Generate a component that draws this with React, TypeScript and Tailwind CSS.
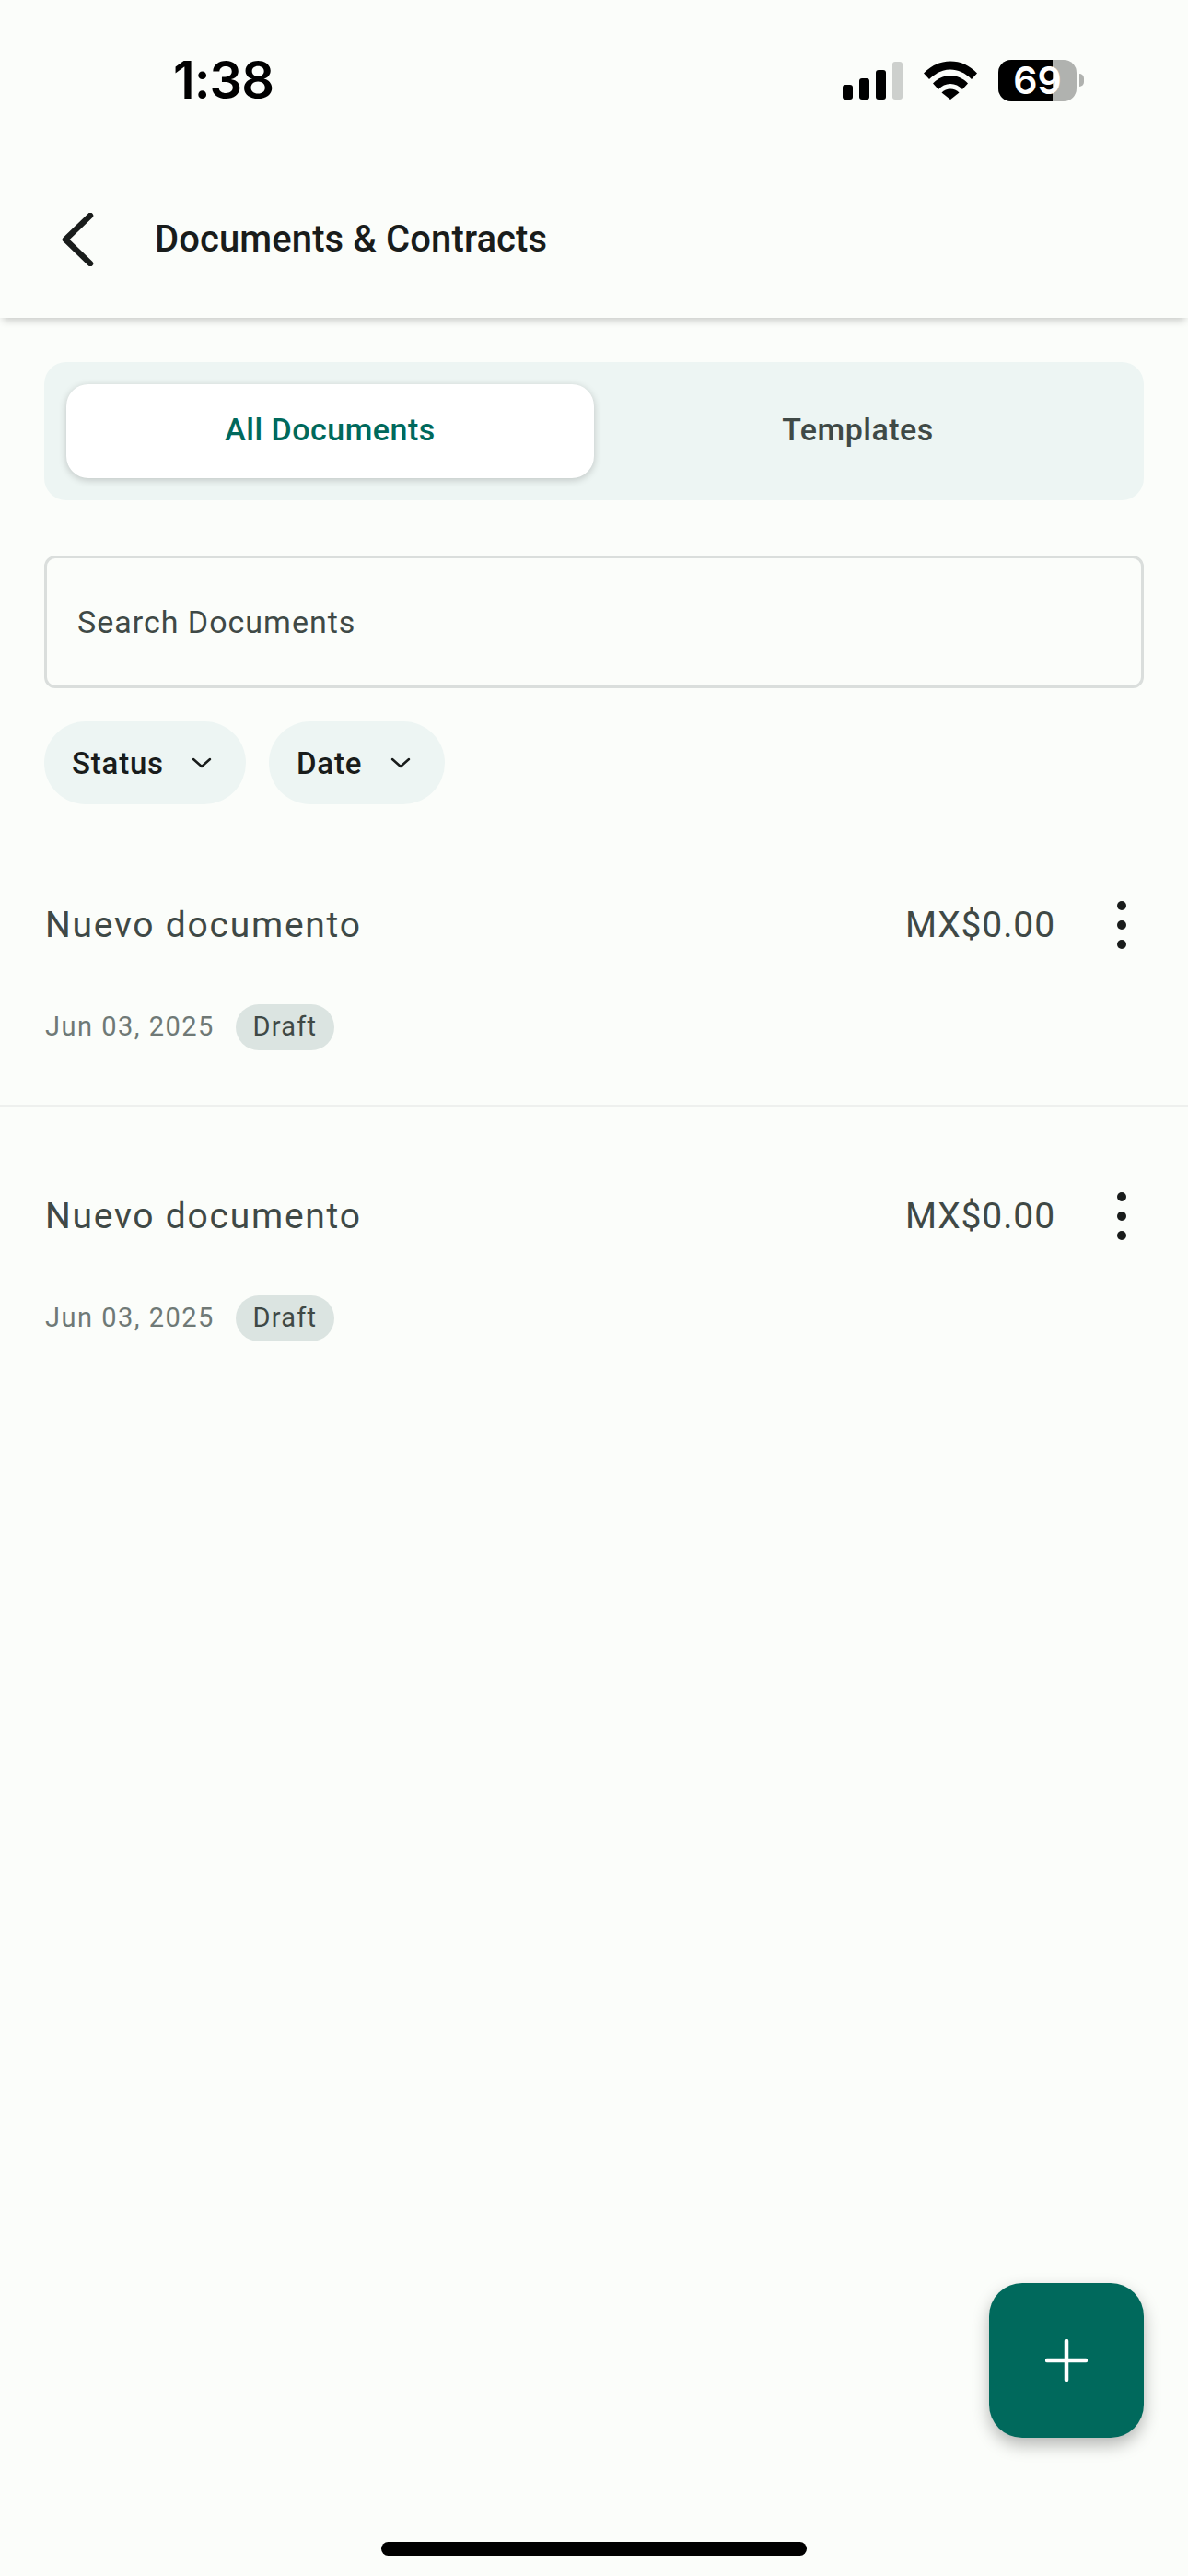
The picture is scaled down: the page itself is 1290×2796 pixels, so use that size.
const font = { fontFamily: "Roboto, sans-serif" };

function StatusBar() {
  return (
    <div className="h-[174px] flex items-center justify-between pl-[188px] pr-[113px]">
      <span className="text-[56px] font-semibold text-black leading-none font-['Inter',sans-serif] tracking-[-1px]">1:38</span>
      <div className="flex items-center">
        {/* signal */}
        <div className="flex items-end gap-[7px] h-[42px]">
          <div className="w-[11px] h-[16px] rounded-[3px] bg-black" />
          <div className="w-[11px] h-[23px] rounded-[3px] bg-black" />
          <div className="w-[11px] h-[32px] rounded-[3px] bg-black" />
          <div className="w-[11px] h-[41px] rounded-[3px] bg-[#cdd0cd]" />
        </div>
        <svg className="ml-[23px]" width="58" height="42" viewBox="0 0 58 42">
          <path d="M0 13.5C8 5 18 0.5 29 0.5s21 4.500 29 13L52 20C45 13 37 9.500 29 9.500S13 13 6 20Z" fill="#000" />
          <path d="M10 24.500C15 19 22 16 29 16s14 3 19 8.500L42 31C38.500 27 34 25 29 25s-9.500 2-13 6Z" fill="#000" />
          <path d="M19.500 34.500C22 32 25.500 30.500 29 30.500s7 1.500 9.500 4L29 42Z" fill="#000" />
        </svg>
        {/* battery */}
        <div className="ml-[23px] relative w-[85px] h-[45px] rounded-[14px] bg-[#b0b2af] flex">
          <div className="w-[59px] bg-black rounded-l-[14px]" />
          <span className="absolute inset-0 flex items-center justify-center text-[41px] font-semibold text-white leading-none font-['Inter',sans-serif]">69</span>
        </div>
        <div className="ml-[3px] w-[5px] h-[14px] rounded-r-full bg-[#b0b2af]" />
      </div>
    </div>
  );
}

function Header() {
  return (
    <header className="h-[171px] flex items-center shadow-[0_6px_8px_-3px_rgba(0,0,0,0.2)] relative">
      <svg className="ml-[66px]" width="36" height="58" viewBox="0 0 36 58" fill="none">
        <path d="M32 3 5 29l27 26" stroke="#191c1b" strokeWidth="6.500" strokeLinecap="round" strokeLinejoin="round" />
      </svg>
      <h1 className="ml-[66px] text-[40px] font-medium text-[#191c1b] tracking-[0.1px]">Documents &amp; Contracts</h1>
    </header>
  );
}

function Chip({ label, width }: { label: string; width: string }) {
  return (
    <div className={`${width} h-[90px] rounded-full bg-[#edf5f3] flex items-center justify-between pl-[30px] pr-[37px]`}>
      <span className="text-[33px] font-medium tracking-[0.8px] text-[#191c1b] relative top-[1px]">{label}</span>
      <svg width="22" height="12" viewBox="0 0 22 12" fill="none">
        <path d="M2 2l9 8 9-8" stroke="#191c1b" strokeWidth="2.500" strokeLinecap="round" strokeLinejoin="round" />
      </svg>
    </div>
  );
}

function DocumentRow({ divider }: { divider?: boolean }) {
  return (
    <div className={`h-[316px] pt-[88px] pl-[49px] pr-[48px] ${divider ? "border-b-[3px] border-[#eef0ee]" : ""}`}>
      <div className="flex items-center justify-between h-[60px]">
        <span className="text-[39px] text-[#3f4946] tracking-[1.75px]">Nuevo documento</span>
        <div className="flex items-center">
          <span className="text-[39px] font-[450] text-[#3f4946] tracking-[0.9px]">MX$0.00</span>
          <svg className="ml-[67px] mr-[19px]" width="10" height="52" viewBox="0 0 10 52" fill="#191c1b">
            <circle cx="5" cy="5" r="5" />
            <circle cx="5" cy="26" r="5" />
            <circle cx="5" cy="47" r="5" />
          </svg>
        </div>
      </div>
      <div className="mt-[56px] h-[50px] flex items-center">
        <span className="text-[29px] text-[#6f7976] tracking-[1.5px]">Jun 03, 2025</span>
        <span className="ml-[23px] w-[107px] h-[50px] rounded-full bg-[#dbe4e1] flex items-center justify-center text-[29px] text-[#3f4946] tracking-[1.2px]">Draft</span>
      </div>
    </div>
  );
}

export default function App() {
  return (
    <div className="relative w-[1290px] h-[2796px] overflow-hidden bg-[#fbfdfa]" style={font}>
      <StatusBar />
      <Header />

      <div className="px-[48px] pt-[48px]">
        {/* Tabs */}
        <div className="h-[150px] rounded-[24px] bg-[#edf5f3] p-[24px] flex">
          <div className="flex-1 rounded-[24px] bg-white shadow-[0_2px_8px_rgba(0,0,0,0.2)] flex items-center justify-center pb-[4px] text-[34px] font-medium text-[#00695c] tracking-[0.5px]">
            All Documents
          </div>
          <div className="flex-1 flex items-center justify-center pb-[4px] text-[34px] font-medium text-[#3f4946] tracking-[0.5px]">
            Templates
          </div>
        </div>

        {/* Search */}
        <div className="mt-[60px] h-[144px] rounded-[12px] border-[3px] border-[#dadedc] flex items-center pl-[33px] pt-[1px] text-[34px] text-[#3f4946] tracking-[1px]">
          Search Documents
        </div>

        {/* Filters */}
        <div className="mt-[36px] flex gap-[25px]">
          <Chip label="Status" width="w-[219px]" />
          <Chip label="Date" width="w-[191px]" />
        </div>
      </div>

      <div className="mt-[13px]">
        <DocumentRow divider />
        <DocumentRow />
      </div>

      <button className="absolute left-[1074px] top-[2478px] w-[168px] h-[168px] rounded-[36px] bg-[#00695c] shadow-[0_8px_18px_rgba(0,0,0,0.28)] flex items-center justify-center">
        <svg width="46" height="46" viewBox="0 0 46 46" fill="none">
          <path d="M23 2v42M2 23h42" stroke="#fff" strokeWidth="4.500" strokeLinecap="round" />
        </svg>
      </button>

      <div className="absolute left-[414px] top-[2759px] w-[462px] h-[15px] rounded-full bg-black" />
    </div>
  );
}
